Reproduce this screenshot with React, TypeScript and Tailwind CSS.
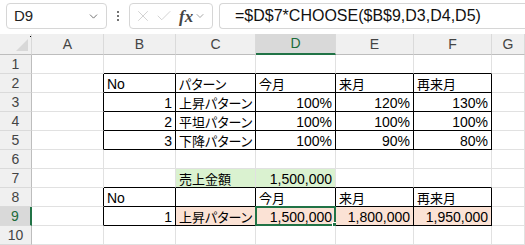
import React from 'react';
import { X, Check, ChevronDown } from 'lucide-react';

type CellData = {
  text?: string;
  align?: 'left' | 'right';
  jp?: boolean;
  fill?: string;
};

const COLS = ['A', 'B', 'C', 'D', 'E', 'F', 'G'];

const data: Record<string, CellData> = {
  B2: { text: 'No' },
  C2: { text: 'パターン', jp: true },
  D2: { text: '今月', jp: true },
  E2: { text: '来月', jp: true },
  F2: { text: '再来月', jp: true },
  B3: { text: '1', align: 'right' },
  C3: { text: '上昇パターン', jp: true },
  D3: { text: '100%', align: 'right' },
  E3: { text: '120%', align: 'right' },
  F3: { text: '130%', align: 'right' },
  B4: { text: '2', align: 'right' },
  C4: { text: '平坦パターン', jp: true },
  D4: { text: '100%', align: 'right' },
  E4: { text: '100%', align: 'right' },
  F4: { text: '100%', align: 'right' },
  B5: { text: '3', align: 'right' },
  C5: { text: '下降パターン', jp: true },
  D5: { text: '100%', align: 'right' },
  E5: { text: '90%', align: 'right' },
  F5: { text: '80%', align: 'right' },
  C7: { text: '売上金額', jp: true, fill: 'bg-[#daf2d0]' },
  D7: { text: '1,500,000', align: 'right', fill: 'bg-[#daf2d0]' },
  B8: { text: 'No' },
  D8: { text: '今月', jp: true },
  E8: { text: '来月', jp: true },
  F8: { text: '再来月', jp: true },
  B9: { text: '1', align: 'right' },
  C9: { text: '上昇パターン', jp: true, fill: 'bg-[#fbe2d5]' },
  D9: { text: '1,500,000', align: 'right', fill: 'bg-[#fbe2d5]' },
  E9: { text: '1,800,000', align: 'right', fill: 'bg-[#fbe2d5]' },
  F9: { text: '1,950,000', align: 'right', fill: 'bg-[#fbe2d5]' },
};

// bordered tables: B2:F5 and B8:F9
const inTable = (r: number, c: number) =>
  c >= 1 && c <= 5 && ((r >= 2 && r <= 5) || (r >= 8 && r <= 9));

const Cell: React.FC<{ r: number; c: number }> = ({ r, c }) => {
  const key = COLS[c] + r;
  const cell = data[key];
  const blackRight = inTable(r, c) || inTable(r, c + 1);
  const blackBottom = inTable(r, c) || inTable(r + 1, c);
  const selected = key === 'D9';

  return (
    <div
      className={`relative flex items-center pt-px px-[3px] border-r border-b overflow-visible whitespace-nowrap text-black ${
        blackRight ? 'border-r-black' : 'border-r-[#e1e1e1]'
      } ${blackBottom ? 'border-b-black' : 'border-b-[#e1e1e1]'} ${cell?.fill ?? 'bg-white'} ${
        cell?.align === 'right' ? 'justify-end' : 'justify-start'
      }`}
    >
      {cell?.text && (
        <span
          className={
            cell.jp
              ? "text-[13px] font-['Noto_Sans_CJK_JP',sans-serif] [font-feature-settings:'palt'] leading-none"
              : "text-[14px] font-['Liberation_Sans',sans-serif] leading-none"
          }
        >
          {cell.text}
        </span>
      )}
      {selected && (
        <>
          <div className="absolute -left-px -top-px -right-px -bottom-px border-2 border-[#217346] pointer-events-none" />
          <div className="absolute -right-[4px] -bottom-[4px] w-[7px] h-[7px] bg-[#217346] border border-white" />
        </>
      )}
    </div>
  );
};

const App: React.FC = () => {
  const rows = [1, 2, 3, 4, 5, 6, 7, 8, 9, 10];

  return (
    <div className="w-[525px] h-[245px] overflow-hidden bg-white font-['Liberation_Sans',sans-serif]">
      {/* formula bar */}
      <div className="h-[34px] flex items-start pt-[3px] bg-white">
        <div className="ml-[6px] w-[101px] h-[26px] rounded-[4px] border border-[#d6d6d6] flex items-center justify-between pl-[7px] pr-[6px]">
          <span className="text-[15px] text-[#222]">D9</span>
          <ChevronDown size={13} strokeWidth={1.5} className="text-[#555]" />
        </div>
        <div className="w-[22px] h-[26px] flex flex-col items-center justify-center gap-[2px]">
          <div className="w-[2px] h-[2px] bg-[#444] rounded-full" />
          <div className="w-[2px] h-[2px] bg-[#444] rounded-full" />
          <div className="w-[2px] h-[2px] bg-[#444] rounded-full" />
        </div>
        <div className="w-[84px] h-[26px] rounded-[4px] border border-[#d6d6d6] flex items-center pl-[4px]">
          <X size={18} strokeWidth={1} className="text-[#c4c4c4]" />
          <Check size={18} strokeWidth={1} className="text-[#c4c4c4] ml-[3px]" />
          <span className="ml-[6px] text-[17px] italic font-bold font-['Liberation_Serif',serif] text-[#444] leading-none">
            fx
          </span>
          <ChevronDown size={12} strokeWidth={1.5} className="text-[#888] ml-[1px]" />
        </div>
        <div className="ml-[6px] flex-1 h-[26px] rounded-l-[4px] border border-r-0 border-[#d6d6d6] flex items-center pl-[15px]">
          <span className="text-[16px] text-[#111] whitespace-nowrap">=$D$7*CHOOSE($B$9,D3,D4,D5)</span>
        </div>
      </div>

      {/* sheet */}
      <div className="grid grid-cols-[32px_72px_72px_80px_80px_78px_78px_1fr] grid-rows-[21px_repeat(10,19px)] bg-[#f0f0f0]">
        {/* corner */}
        <div className="relative border-r border-b border-r-[#d9d9d9] border-b-[#bdbdbd] bg-[#f0f0f0]">
          <svg className="absolute right-[3px] bottom-[3px]" width="12" height="12" viewBox="0 0 12 12">
            <polygon points="12,0 12,12 0,12" fill="#d8d8d8" />
          </svg>
          <div className="absolute right-0 top-[2px] w-px h-px bg-black" />
        </div>
        {COLS.map((col) => {
          const sel = col === 'D';
          return (
            <div
              key={col}
              className={`flex items-center justify-center text-[14px] border-r border-r-[#dadada] ${
                sel ? 'bg-[#d9d9d9] text-[#1c6b3a] border-b-2 border-b-[#217346]' : 'bg-[#f0f0f0] text-[#444] border-b border-b-[#bdbdbd]'
              }`}
            >
              {col}
            </div>
          );
        })}

        {rows.map((r) => (
          <React.Fragment key={r}>
            <div
              className={`flex items-center justify-center text-[14px] border-b border-b-[#dadada] ${
                r === 9
                  ? 'bg-[#d9d9d9] text-[#1c6b3a] border-r-2 border-r-[#217346]'
                  : 'bg-[#f0f0f0] text-[#444] border-r border-r-[#bdbdbd]'
              }`}
            >
              {r}
            </div>
            {COLS.map((_, c) => (
              <Cell key={c} r={r} c={c} />
            ))}
          </React.Fragment>
        ))}
      </div>
    </div>
  );
};

export default App;
